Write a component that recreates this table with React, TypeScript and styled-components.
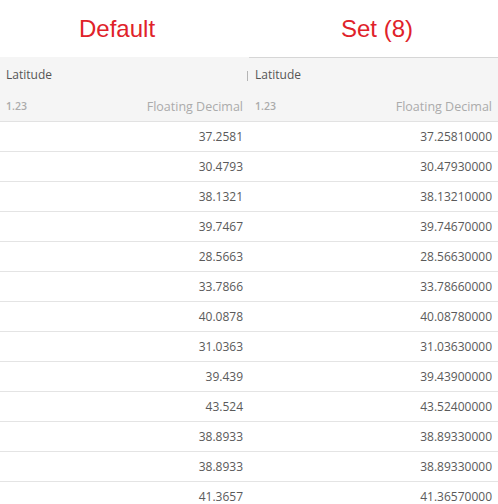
import styled, { createGlobalStyle } from "styled-components";

const GlobalStyle = createGlobalStyle`
  html, body {
    margin: 0;
    padding: 0;
    background: #ffffff;
  }
  body {
    font-family: "Open Sans", "Liberation Sans", sans-serif;
  }
`;

const values = [
  37.2581, 30.4793, 38.1321, 39.7467, 28.5663, 33.7866, 40.0878, 31.0363,
  39.439, 43.524, 38.8933, 38.8933, 41.3657,
];

const Page = styled.div`
  display: grid;
  grid-template-columns: 249px 249px;
  width: 498px;
  height: 504px;
  overflow: hidden;
`;

const Panel = styled.div`
  display: flex;
  flex-direction: column;
`;

const Title = styled.div<{ $indent: number }>`
  height: 57px;
  display: flex;
  align-items: center;
  padding-left: ${(p) => p.$indent}px;
  font-family: "Liberation Sans", Arial, sans-serif;
  font-size: 24px;
  color: #e0222a;
`;

const Header = styled.div<{ $topBorder: boolean }>`
  position: relative;
  background: #f5f5f5;
  border-top: 1px solid ${(p) => (p.$topBorder ? "#d6d6d6" : "#f5f5f5")};
  border-bottom: 1px solid #e2e2e2;
`;

const HeaderName = styled.div`
  height: 33px;
  display: flex;
  align-items: center;
  padding: 0 6px;
  font-size: 12px;
  color: #555555;
`;

const HeaderType = styled.div`
  height: 30px;
  display: flex;
  align-items: center;
  justify-content: space-between;
  padding: 0 6px;
  font-size: 12.5px;
  color: #ababab;
`;

const TypeIcon = styled.span`
  font-size: 10.5px;
  font-weight: 600;
  color: #ababab;
`;

const Handle = styled.div`
  position: absolute;
  right: 1px;
  top: 13px;
  width: 1px;
  height: 10px;
  background: #b5b5b5;
`;

const Row = styled.div`
  height: 29px;
  display: flex;
  align-items: center;
  justify-content: flex-end;
  padding: 0 6px;
  font-size: 12px;
  color: #5a5a5a;
  border-bottom: 1px solid #e4e4e4;
`;

function Column({
  title,
  indent,
  topBorder,
  format,
}: {
  title: string;
  indent: number;
  topBorder: boolean;
  format: (v: number) => string;
}) {
  return (
    <Panel>
      <Title $indent={indent}>{title}</Title>
      <Header $topBorder={topBorder}>
        <HeaderName>Latitude</HeaderName>
        <HeaderType>
          <TypeIcon>1.23</TypeIcon>
          <span>Floating Decimal</span>
        </HeaderType>
        {!topBorder && <Handle />}
      </Header>
      {values.map((v, i) => (
        <Row key={i}>{format(v)}</Row>
      ))}
    </Panel>
  );
}

export default function App() {
  return (
    <>
      <GlobalStyle />
      <Page>
        <Column
          title="Default"
          indent={79}
          topBorder={false}
          format={(v) => String(v)}
        />
        <Column
          title="Set (8)"
          indent={92}
          topBorder={true}
          format={(v) => v.toFixed(8)}
        />
      </Page>
    </>
  );
}
